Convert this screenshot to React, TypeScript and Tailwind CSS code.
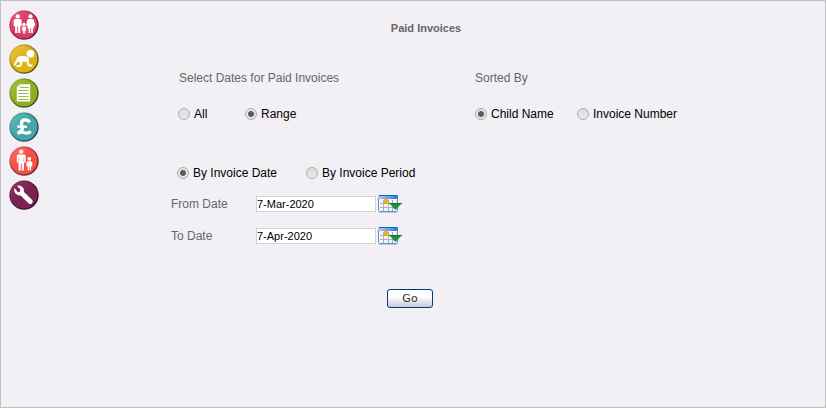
import type { ReactNode } from "react";

type NavItem = { label: string; from: string; to: string; glyph: ReactNode };

const navItems: NavItem[] = [
  {
    label: "Families",
    from: "#e8577c",
    to: "#dc3a62",
    glyph: (
      <g fill="#fff">
        <circle cx="8.7" cy="6.4" r="2.1" />
        <path d="M6.3 9h4.8q1.6 0 1.6 1.6v5.6h-1.4V23H9.1v-6.4h-.8V23H6.1v-6.8H4.7v-5.6Q4.7 9 6.3 9z" />
        <circle cx="21.5" cy="6.4" r="2.1" />
        <path d="M19.7 9h3.6q1.3 0 1.6 1.2l1.5 5.6-1.4.5-.7-1.5.9 3.4h-1.3V23h-1.8v-4.8h-.8V23h-1.8v-4.8h-1.4l1-3.4-.7 1.5-1.4-.5 1.2-5.6Q18.500 9 19.700 9z" />
        <circle cx="15" cy="14.4" r="1.6" />
        <path d="M13.900 16.400h2.300q1 0 1 1v3h-.9V23.800h-1v-3h-.5v3h-1V20.400h-.9v-3q0-1 1-1z" />
      </g>
    ),
  },
  {
    label: "Children",
    from: "#e9c53a",
    to: "#dcb41a",
    glyph: (
      <g>
        <circle cx="21.4" cy="9.8" r="3.9" fill="#fff" />
        <path d="M10.400 12h5.400q1.600.1 4 2.600l.2 2-2.800 1.400-4.200-.4-1.400 1.600-4.200-2.800z" fill="#fff" />
        <path
          d="M9.400 13.800 5.800 20.600M9.600 16.400l3 1.800-1.400 3.800H8.200M18.400 15.800l1.200 5.600h3.200"
          fill="none"
          stroke="#fff"
          strokeWidth="2"
          strokeLinecap="round"
          strokeLinejoin="round"
        />
      </g>
    ),
  },
  {
    label: "Registers",
    from: "#a3c43c",
    to: "#8cae20",
    glyph: (
      <g>
        <path d="M10.6 6.2h10.6v17.4H7.800V9z" fill="#fff" />
        <path d="M10.600 6.200V9H7.800z" fill="#cfdf9a" />
        <path d="M11 9.500h8.600M9.400 12.500h10.200M9.400 15.500h10.200M9.400 18.500h10.200M9.400 21.500h10.200" stroke="#9dba42" strokeWidth="1" />
      </g>
    ),
  },
  {
    label: "Finance",
    from: "#5dbabc",
    to: "#45a5a9",
    glyph: (
      <g fill="none" stroke="#fff">
        <path d="M20.600 10.400Q19.400 7.900 16.400 7.900 12.400 7.900 12.400 11.600 12.400 12.800 13 14.400 14.200 18.400 9.600 20.800" strokeWidth="3.400" />
        <path d="M8.200 14.700h9.600" strokeWidth="2.400" />
        <path d="M8.400 21.300Q12 19.400 15 20.600 18.600 22.200 21.800 19.600" strokeWidth="3.200" />
      </g>
    ),
  },
  {
    label: "Staff",
    from: "#fa6d66",
    to: "#f44f48",
    glyph: (
      <g fill="#fff">
        <circle cx="12.200" cy="5.600" r="2.200" />
        <path d="M9.500 8.400h5.400q1.800 0 1.800 1.800v6.400H15V24.400h-2.300v-6.600h-.9v6.600H9.500v-7.800H7.800v-6.400q0-1.800 1.700-1.800z" />
        <path d="M9.700 11.400v4.800M14.800 11.400v4.800" stroke="#f4564f" strokeWidth=".5" />
        <circle cx="20.300" cy="12.800" r="1.900" />
        <path d="M19 15.200h2.700q1.600 0 1.600 1.500v3.500h-1.200v4.200h-1.400v-3.600H20v3.600h-1.400v-4.200h-1.200v-3.500q0-1.500 1.600-1.500z" />
      </g>
    ),
  },
  {
    label: "Settings",
    from: "#8f2f66",
    to: "#7b2253",
    glyph: (
      <path
        d="M5.6 8q-1.2 3.2 1.2 5.8 2 2 4.8 1.6l8.2 8q1.6 1.4 3.2-.2t.2-3.2l-8.2-8q.6-3-1.4-5-2.400-2.200-5.600-1.200l3.400 3.600-.6 2.400-2 .4z"
        fill="#fff"
      />
    ),
  },
];

function SideNav() {
  return (
    <nav className="flex shrink-0 flex-col gap-1 pt-[9px] pl-2">
      {navItems.map((item, index) => (
        <a key={item.label} href="#" aria-label={item.label} className="block">
          <svg width="30" height="30" viewBox="0 0 30 30">
            <defs>
              <linearGradient id={`disc-${index}`} x1="0" y1="0" x2="1" y2="1">
                <stop offset="0.1" stopColor={item.from} />
                <stop offset="0.45" stopColor={item.to} />
              </linearGradient>
              <linearGradient id={`rim-${index}`} x1="0" y1="0" x2="1" y2="1">
                <stop offset="0.15" stopColor="#000" stopOpacity="0.1" />
                <stop offset="0.9" stopColor="#000" stopOpacity="0.6" />
              </linearGradient>
            </defs>
            <circle cx="15" cy="15" r="14.6" fill={`url(#disc-${index})`} />
            <circle cx="15" cy="15" r="14" fill="none" stroke={`url(#rim-${index})`} strokeWidth="1.4" />
            {item.glyph}
          </svg>
        </a>
      ))}
    </nav>
  );
}

type RadioProps = { name: string; label: string; checked?: boolean };

function Radio({ name, label, checked = false }: RadioProps) {
  return (
    <label className="flex h-4 items-center gap-1 whitespace-nowrap text-black">
      <input
        type="radio"
        name={name}
        defaultChecked={checked}
        className="size-3 shrink-0 appearance-none rounded-full border border-[#adadad] bg-linear-to-b from-[#dcdcdc] to-[#e9e9e9] checked:bg-[radial-gradient(circle,#5c5c5c_0,#5c5c5c_2.5px,#e6e6e6_3.5px)]"
      />
      {label}
    </label>
  );
}

function CalendarIcon() {
  return (
    <svg width="24" height="18" viewBox="0 0 24 18">
      <defs>
        <linearGradient id="calendar-bar" x1="0" y1="0" x2="1" y2="0">
          <stop offset="0" stopColor="#a5d0f8" />
          <stop offset="1" stopColor="#2b78d4" />
        </linearGradient>
      </defs>
      <rect x="0.5" y="0.5" width="19" height="16" rx="1" fill="#f2f2f2" stroke="#5a96d2" />
      <rect x="0" y="0" width="20" height="4" rx="1" fill="url(#calendar-bar)" />
      <path d="M1 .5h18" stroke="#1663bb" />
      <path d="M2 8.5h16M2 12.5h16M5.5 5v11M10.5 5v11M14.5 5v11" stroke="#b3aeaa" />
      <rect x="6" y="4" width="4" height="4" fill="#fba90f" />
      <path d="M1 17.5h18" stroke="#aac8e4" />
      <path d="M11 8h13l-6.5 7z" fill="#1b9140" />
      <path d="M11 8.5h13" stroke="#12702f" />
    </svg>
  );
}

function DateField({ id, label, value }: { id: string; label: string; value: string }) {
  return (
    <div className="flex h-[18px] items-center">
      <label htmlFor={id} className="w-[85px] shrink-0">
        {label}
      </label>
      <input
        id={id}
        type="text"
        defaultValue={value}
        className="h-4 w-[120px] border border-[#d4d4d4] bg-white text-[11px] leading-3 text-black"
      />
      <button type="button" aria-label={`Choose ${label}`} className="ml-0.5">
        <CalendarIcon />
      </button>
    </div>
  );
}

export default function App() {
  return (
    <div className="flex min-h-screen border border-[#c0c0c0] bg-[#f2f0f4] font-['Liberation_Sans',Arial,sans-serif] text-xs leading-4 text-[#666]">
      <SideNav />
      <main className="min-w-0 flex-1 pt-[19px]">
        <h1 className="pr-3 text-center text-[11px] font-bold">Paid Invoices</h1>
        <form className="pt-[34px] pl-[132px]">
          <div className="flex">
            <section className="w-[304px] shrink-0">
              <h2 className="pl-2">Select Dates for Paid Invoices</h2>
              <div className="flex pt-5 pl-[7px]">
                <div className="w-[67px]">
                  <Radio name="scope" label="All" />
                </div>
                <Radio name="scope" label="Range" checked />
              </div>
              <div className="flex pt-[43px] pl-1.5">
                <div className="w-[129px]">
                  <Radio name="basis" label="By Invoice Date" checked />
                </div>
                <Radio name="basis" label="By Invoice Period" />
              </div>
              <div className="flex flex-col gap-3.5 pt-3.5">
                <DateField id="from-date" label="From Date" value="7-Mar-2020" />
                <DateField id="to-date" label="To Date" value="7-Apr-2020" />
              </div>
            </section>
            <section>
              <h2>Sorted By</h2>
              <div className="flex pt-5">
                <div className="w-[102px]">
                  <Radio name="sort" label="Child Name" checked />
                </div>
                <Radio name="sort" label="Invoice Number" />
              </div>
            </section>
          </div>
          <div className="flex pt-11 pl-[216px]">
            <button
              type="button"
              className="h-[19px] w-[46px] rounded-[3px] border border-[#003c74] bg-linear-to-b from-white from-40% to-[#c9c8d8] font-['DejaVu_Sans',Verdana,sans-serif] text-[11px] leading-4 text-[#333]"
            >
              Go
            </button>
          </div>
        </form>
      </main>
    </div>
  );
}
